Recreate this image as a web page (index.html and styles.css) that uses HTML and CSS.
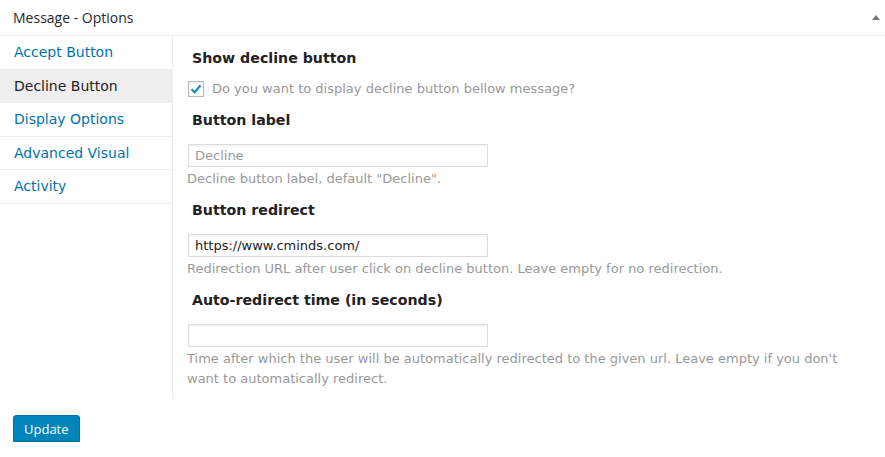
FILE: index.html
```html
<!DOCTYPE html>
<html>
<head>
<meta charset="utf-8">
<link rel="stylesheet" href="styles.css">
</head>
<body>
<div class="box">
  <div class="box-head">
    <span class="box-title">Message - Options</span>
    <span class="toggle"></span>
  </div>
  <div class="tabs">
    <ul class="nav">
      <li class="nav-item"><a>Accept Button</a></li>
      <li class="nav-item active"><a>Decline Button</a></li>
      <li class="nav-item"><a>Display Options</a></li>
      <li class="nav-item"><a>Advanced Visual</a></li>
      <li class="nav-item"><a>Activity</a></li>
    </ul>
    <div class="panel">
      <h3 class="h first">Show decline button</h3>
      <label class="check-row">
        <span class="check"><svg width="12" height="12" viewBox="0 0 12 12"><path d="M1.5 6.2 L4.6 9.3 L10.6 2.2" fill="none" stroke="#1e8cbe" stroke-width="2.2"/></svg></span>
        <span class="check-text">Do you want to display decline button bellow message?</span>
      </label>
      <h3 class="h">Button label</h3>
      <div class="input"><span class="ph">Decline</span></div>
      <p class="desc">Decline button label, default "Decline".</p>
      <h3 class="h">Button redirect</h3>
      <div class="input"><span class="val">https://www.cminds.com/</span></div>
      <p class="desc">Redirection URL after user click on decline button. Leave empty for no redirection.</p>
      <h3 class="h">Auto-redirect time (in seconds)</h3>
      <div class="input"></div>
      <p class="desc">Time after which the user will be automatically redirected to the given url. Leave empty if you don't want to automatically redirect.</p>
    </div>
  </div>
  <div class="foot">
    <button class="btn">Update</button>
  </div>
</div>
</body>
</html>
```
FILE: styles.css
```css
html, body { margin: 0; padding: 0; background: #fff; }
body { font-family: "DejaVu Sans", Verdana, sans-serif; color: #222; }
.box-head {
  height: 35px;
  border-bottom: 1px solid #eee;
  display: flex;
  align-items: center;
  justify-content: space-between;
  padding: 0 5px 0 13px;
}
.box-title { font-family: "Open Sans", sans-serif; font-size: 14px; color: #23282d; }
.toggle {
  width: 0; height: 0;
  border-left: 4px solid transparent;
  border-right: 4px solid transparent;
  border-bottom: 5px solid #777;
  margin-bottom: 1px;
}
.tabs { display: flex; align-items: flex-start; }
.nav { list-style: none; margin: 0; padding: 0; width: 172px; flex: none; }
.nav-item {
  height: 32.5px;
  border-bottom: 1px solid #eee;
  display: flex;
  align-items: center;
  padding-left: 14px;
  font-size: 14px;
  color: #0073aa;
}
.nav-item.active { background: #eee; color: #222; }
.panel {
  flex: 1;
  border-left: 1px solid #eee;
  padding: 0 0 10px 14px;
}
.h { margin: 12px 0 0 0; font-size: 14.2px; font-weight: bold; color: #222; padding-left: 5px; line-height: 18px; }
.h.first { margin-top: 13px; }
.check-row { display: flex; align-items: center; margin-top: 13px; height: 17px; }
.check-row + .h { margin-top: 14px; }
.check {
  width: 14px; height: 14px;
  border: 1px solid #b4b9be;
  box-shadow: inset 0 1px 2px rgba(0,0,0,0.1);
  display: flex; align-items: center; justify-content: center;
  margin-left: 1px;
}
.check-text { margin-left: 8px; font-size: 13px; color: #999; }
.input {
  box-sizing: border-box;
  width: 300px; height: 23px;
  border: 1px solid #ddd;
  box-shadow: inset 0 1px 2px rgba(0,0,0,0.07);
  margin-top: 15px;
  margin-left: 1px;
  display: flex; align-items: center;
  padding-left: 6px;
  font-size: 13px;
}
.ph { color: #999; }
.val { color: #222; }
.desc { margin: 2px 0 0 0; font-size: 13px; color: #999; line-height: 20px; max-width: 660px; }
.foot { padding: 16px 0 0 13px; }
.btn {
  font-family: "Open Sans", sans-serif;
  font-size: 13px;
  color: #fff;
  background: #0085ba;
  border: 1px solid #0073aa;
  border-radius: 3px;
  box-shadow: 0 1px 0 #006799;
  height: 27px;
  padding: 0 10px;
}
```
